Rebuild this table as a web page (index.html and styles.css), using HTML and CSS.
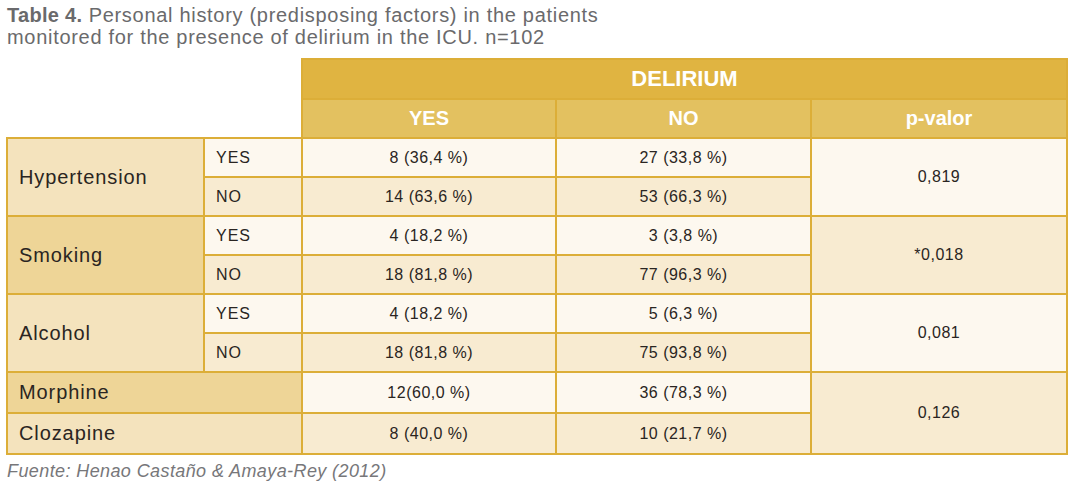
FILE: index.html
```html
<!DOCTYPE html>
<html>
<head>
<meta charset="utf-8">
<link rel="stylesheet" href="styles.css">
</head>
<body>
<div class="page">
  <p class="caption"><b>Table 4.</b> Personal history (predisposing factors) in the patients<br>monitored for the presence of delirium in the ICU. n=102</p>
  <table class="data">
    <colgroup>
      <col class="c1"><col class="c2"><col class="c3"><col class="c4"><col class="c5">
    </colgroup>
    <thead>
      <tr class="h1">
        <th class="blank" colspan="2" rowspan="2"></th>
        <th class="delirium" colspan="3">DELIRIUM</th>
      </tr>
      <tr class="h2">
        <th class="sub">YES</th>
        <th class="sub">NO</th>
        <th class="sub">p-valor</th>
      </tr>
    </thead>
    <tbody>
      <tr class="r">
        <td class="lab light" rowspan="2">Hypertension</td>
        <td class="yn y">YES</td>
        <td class="v y">8 (36,4 %)</td>
        <td class="v y">27 (33,8 %)</td>
        <td class="p y" rowspan="2">0,819</td>
      </tr>
      <tr class="r">
        <td class="yn n">NO</td>
        <td class="v n">14 (63,6 %)</td>
        <td class="v n">53 (66,3 %)</td>
      </tr>
      <tr class="r">
        <td class="lab dark" rowspan="2">Smoking</td>
        <td class="yn y">YES</td>
        <td class="v y">4 (18,2 %)</td>
        <td class="v y">3 (3,8 %)</td>
        <td class="p n" rowspan="2">*0,018</td>
      </tr>
      <tr class="r">
        <td class="yn n">NO</td>
        <td class="v n">18 (81,8 %)</td>
        <td class="v n">77 (96,3 %)</td>
      </tr>
      <tr class="r">
        <td class="lab light" rowspan="2">Alcohol</td>
        <td class="yn y">YES</td>
        <td class="v y">4 (18,2 %)</td>
        <td class="v y">5 (6,3 %)</td>
        <td class="p y" rowspan="2">0,081</td>
      </tr>
      <tr class="r">
        <td class="yn n">NO</td>
        <td class="v n">18 (81,8 %)</td>
        <td class="v n">75 (93,8 %)</td>
      </tr>
      <tr class="r2">
        <td class="lab dark" colspan="2">Morphine</td>
        <td class="v y">12(60,0 %)</td>
        <td class="v y">36 (78,3 %)</td>
        <td class="p n" rowspan="2">0,126</td>
      </tr>
      <tr class="r2">
        <td class="lab light" colspan="2">Clozapine</td>
        <td class="v n">8 (40,0 %)</td>
        <td class="v n">10 (21,7 %)</td>
      </tr>
    </tbody>
  </table>
  <p class="source">Fuente: Henao Castaño &amp; Amaya-Rey (2012)</p>
</div>
</body>
</html>
```

FILE: styles.css
```css
html, body {
  margin: 0;
  padding: 0;
  background: #ffffff;
}

.page {
  padding: 4px 0 0 6px;
  font-family: "Liberation Sans", Arial, sans-serif;
}

.caption {
  margin: 0 0 10px 1px;
  font-size: 20px;
  line-height: 22px;
  letter-spacing: 0.7px;
  color: #6a6a6c;
}

.caption b {
  font-weight: bold;
  letter-spacing: 0.3px;
}

.data {
  border-collapse: collapse;
  table-layout: fixed;
  width: 1060px;
}

.c1 { width: 197px; }
.c2 { width: 98px; }
.c3 { width: 254px; }
.c4 { width: 255px; }
.c5 { width: 256px; }

.data th,
.data td {
  border: 2px solid #dcae38;
  padding: 0;
}

.data th.blank {
  border: 0;
  background: #ffffff;
}

.h1 { height: 40px; }
.h2 { height: 39px; }
.r { height: 39px; }
.r2 { height: 41px; }

.delirium {
  background: #e0b441;
  color: #ffffff;
  font-size: 22px;
  font-weight: bold;
  text-align: center;
}

.sub {
  background: #e3c160;
  color: #ffffff;
  font-size: 20px;
  font-weight: bold;
  text-align: center;
}

.data td.lab {
  font-size: 20px;
  color: #2a2522;
  text-align: left;
  padding-left: 11px;
  letter-spacing: 0.9px;
}

.lab.light { background: #f4e3bd; }
.lab.dark { background: #eed597; }

.data td.yn {
  font-size: 16px;
  letter-spacing: 1px;
  color: #2a2522;
  padding-left: 11px;
}

.v, .p {
  font-size: 16px;
  letter-spacing: 0.5px;
  color: #2a2522;
  text-align: center;
}

.y { background: #fdf8ef; }
.n { background: #f8ebd1; }

.source {
  margin: 6px 0 0 1px;
  font-size: 18px;
  font-style: italic;
  letter-spacing: 0.4px;
  color: #77777a;
}
```
